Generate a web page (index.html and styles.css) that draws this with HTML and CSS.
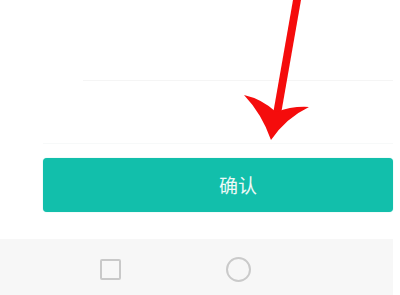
FILE: index.html
```html
<!DOCTYPE html>
<html lang="zh">
<head>
<meta charset="utf-8">
<link rel="stylesheet" href="styles.css">
</head>
<body>
<div class="page">
  <div class="content">
    <div class="row row-first"></div>
    <div class="row row-second"></div>
    <div class="btn-wrap">
      <button class="confirm">确认</button>
    </div>
  </div>
  <nav class="navbar">
    <span class="nav-square"></span>
    <span class="nav-circle"></span>
  </nav>
  <svg class="arrow" width="400" height="160" viewBox="0 0 400 160">
    <path d="M293 0 L301 0 L281 114 L273 114 Z" fill="#f50c0c"/>
    <path d="M244 95 Q262 99 276 112 Q292 106 309 107 Q286 118 271 140 Q262 114 244 95 Z" fill="#f50c0c"/>
  </svg>
</div>
</body>
</html>
```
FILE: styles.css
```css
html, body {
  margin: 0;
  padding: 0;
  background: #ffffff;
}
.page {
  position: relative;
  width: 400px;
  height: 295px;
  overflow: hidden;
  font-family: "Noto Sans CJK SC", "Noto Sans", sans-serif;
}
.content {
  height: 239px;
  display: flex;
  flex-direction: column;
}
.row {
  width: 310px;
  margin-left: 83px;
}
.row-first {
  height: 80px;
  border-bottom: 1px solid #f5f5f5;
}
.row-second {
  width: 350px;
  margin-left: 43px;
  height: 62px;
  border-bottom: 1px solid #f7f9f9;
}
.btn-wrap {
  padding: 14px 0 0 43px;
}
.confirm {
  display: block;
  width: 350px;
  height: 54px;
  border: none;
  border-radius: 4px;
  background: #12bfab;
  color: #eef9f7;
  font-family: "Noto Sans CJK SC", "Noto Sans", sans-serif;
  font-size: 19px;
  padding: 0 0 2px 40px;
  box-shadow: 0 0 1px #7ad9cd;
}
.navbar {
  width: 393px;
  height: 56px;
  background: #f7f7f7;
  display: flex;
  align-items: center;
}
.nav-square {
  width: 17px;
  height: 17px;
  border: 2px solid #c9c9c9;
  border-radius: 2px;
  margin-left: 100px;
  margin-top: 5px;
}
.nav-circle {
  width: 21px;
  height: 21px;
  border: 2px solid #cacaca;
  border-radius: 50%;
  margin-left: 105px;
  margin-top: 5px;
}
.arrow {
  position: absolute;
  left: 0;
  top: 0;
}
```
